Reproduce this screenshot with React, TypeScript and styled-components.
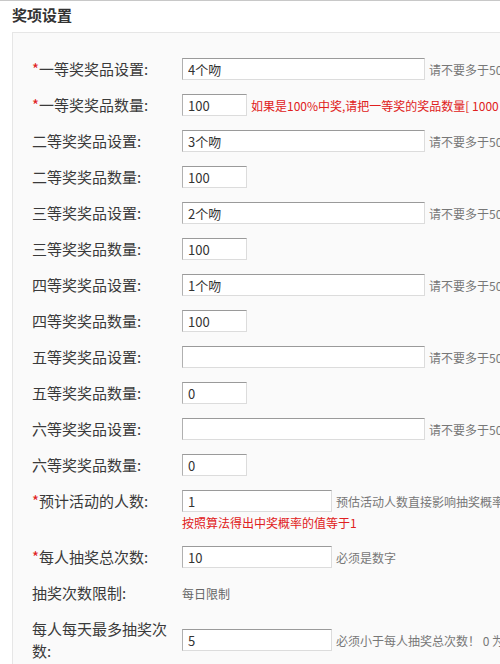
import React from "react";
import styled, { createGlobalStyle } from "styled-components";

const Global = createGlobalStyle`
  html, body { margin: 0; padding: 0; background: #fff; }
  body {
    font-family: "Noto Sans CJK SC", "Noto Sans", sans-serif;
    color: #333;
    overflow: hidden;
    width: 500px;
    height: 664px;
  }
`;

const Page = styled.div`
  border-top: 1px solid #c8c8c8;
  width: 500px;
`;

const Title = styled.h2`
  margin: 0;
  padding-left: 12px;
  height: 31px;
  line-height: 27px;
  font-size: 15px;
  font-weight: bold;
  color: #333;
`;

const Card = styled.div`
  margin-left: 12px;
  width: 560px;
  border: 1px solid #e6e6e6;
  border-right: none;
  background: #fafafa;
  padding: 18px 0 20px 19px;
`;

const Row = styled.div<{ $align?: string }>`
  display: grid;
  grid-template-columns: 140px 1fr;
  column-gap: 10px;
  align-items: ${(p) => p.$align || "center"};
  padding: 7px 0;
`;

const Label = styled.div`
  font-size: 15px;
  line-height: 22px;
  color: #3a3a3a;
  white-space: normal;
`;

const Star = styled.span`
  color: #e02020;
`;

const Value = styled.div`
  display: flex;
  flex-direction: column;
  align-items: flex-start;
`;

const Line = styled.div`
  display: flex;
  align-items: center;
  white-space: nowrap;
  height: 22px;
`;

const Input = styled.input<{ $w: number }>`
  box-sizing: border-box;
  width: ${(p) => p.$w}px;
  height: 22px;
  margin: 0;
  padding: 0 5px;
  border: 1px solid #dcdcdc;
  border-top-color: #9a9a9a;
  border-left-color: #b0b0b0;
  background: #fff;
  font-family: "Noto Sans CJK SC", "Noto Sans", sans-serif;
  font-size: 13px;
  color: #333;
  outline: none;
`;

const Hint = styled.span<{ $red?: boolean }>`
  margin-left: 4px;
  font-size: 12px;
  color: ${(p) => (p.$red ? "#e02020" : "#777")};
`;

const Note = styled.div`
  font-size: 12px;
  line-height: 18px;
  margin-top: 2px;
  color: #e02020;
  white-space: nowrap;
`;

const Plain = styled.span`
  font-size: 12px;
  color: #666;
`;

type Field = {
  label: string;
  req?: boolean;
  value: string;
  w: number;
  hint?: string;
  red?: boolean;
};

const LONG = 243;
const SHORT = 65;
const MID = 150;
const LIMIT = "请不要多于50个字";

const prizes = ["一", "二", "三", "四", "五", "六"];
const names = ["4个吻", "3个吻", "2个吻", "1个吻", "", ""];
const counts = ["100", "100", "100", "100", "0", "0"];

const fields: Field[] = prizes.flatMap((p, i) => [
  {
    label: `${p}等奖奖品设置:`,
    req: i === 0,
    value: names[i],
    w: LONG,
    hint: LIMIT,
  },
  {
    label: `${p}等奖奖品数量:`,
    req: i === 0,
    value: counts[i],
    w: SHORT,
    hint: i === 0 ? "如果是100%中奖,请把一等奖的奖品数量[ 1000 ]设置为预计活动人数" : undefined,
    red: i === 0,
  },
]);

export default function App() {
  return (
    <Page>
      <Global />
      <Title>奖项设置</Title>
      <Card>
        {fields.map((f, i) => (
          <Row key={i}>
            <Label>
              {f.req && <Star>*</Star>}
              {f.label}
            </Label>
            <Value>
              <Line>
                <Input $w={f.w} defaultValue={f.value} />
                {f.hint && <Hint $red={f.red}>{f.hint}</Hint>}
              </Line>
            </Value>
          </Row>
        ))}
        <Row $align="start">
          <Label>
            <Star>*</Star>预计活动的人数:
          </Label>
          <Value>
            <Line>
              <Input $w={MID} defaultValue="1" />
              <Hint>预估活动人数直接影响抽奖概率</Hint>
            </Line>
            <Note>按照算法得出中奖概率的值等于1</Note>
          </Value>
        </Row>
        <Row>
          <Label>
            <Star>*</Star>每人抽奖总次数:
          </Label>
          <Value>
            <Line>
              <Input $w={MID} defaultValue="10" />
              <Hint>必须是数字</Hint>
            </Line>
          </Value>
        </Row>
        <Row>
          <Label>抽奖次数限制:</Label>
          <Value>
            <Line>
              <Plain>每日限制</Plain>
            </Line>
          </Value>
        </Row>
        <Row>
          <Label>每人每天最多抽奖次数:</Label>
          <Value>
            <Line>
              <Input $w={MID} defaultValue="5" />
              <Hint>必须小于每人抽奖总次数！ 0 为不限制</Hint>
            </Line>
          </Value>
        </Row>
      </Card>
    </Page>
  );
}
